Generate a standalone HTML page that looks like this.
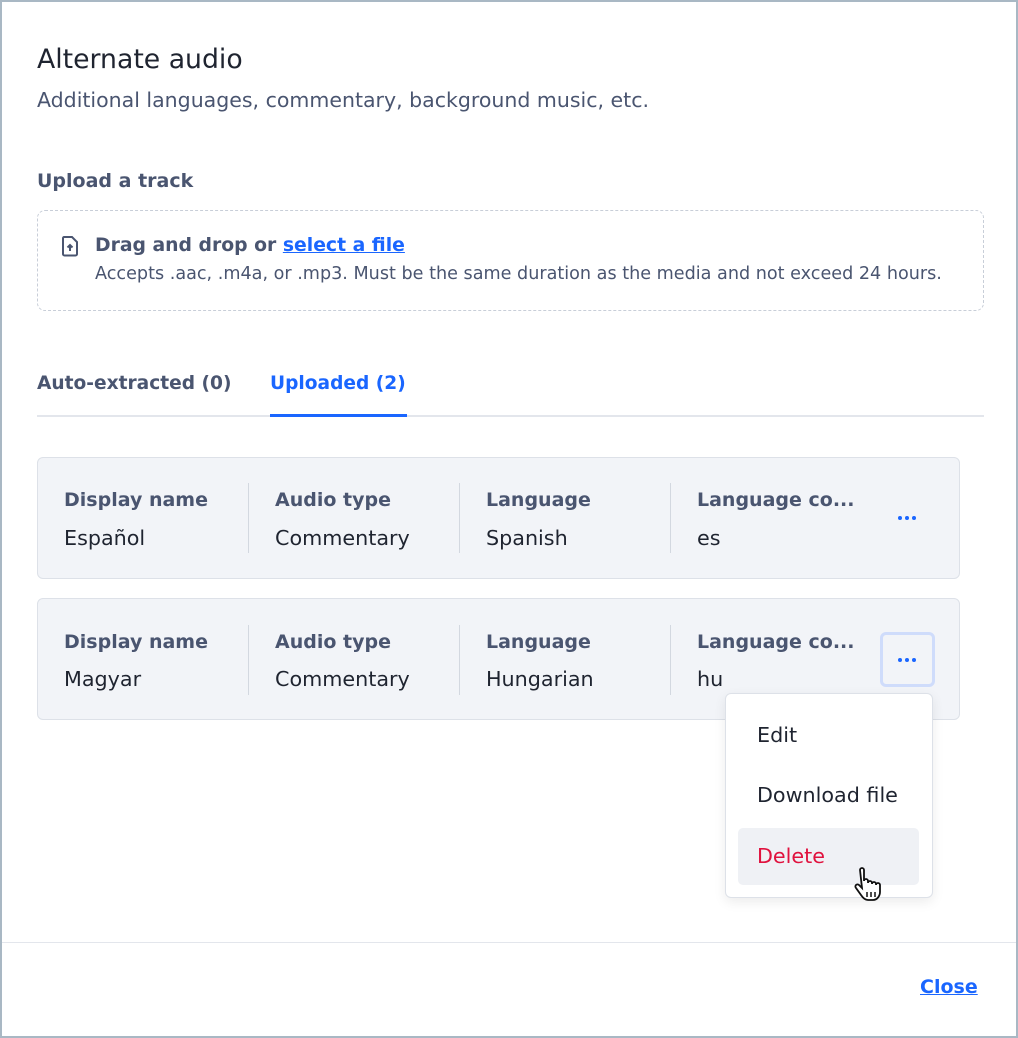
<!DOCTYPE html><html><head><meta charset="utf-8"><style>
*{box-sizing:border-box;margin:0;padding:0}
body{width:1018px;height:1038px;background:#fff;font-family:"DejaVu Sans","Liberation Sans",sans-serif;position:relative;overflow:hidden;color:#1f2430}
.frame{position:absolute;left:0;top:0;width:1018px;height:1038px;border:2px solid #a9b8c4}
.a{position:absolute;white-space:nowrap}
.card{position:absolute;left:37px;width:923px;height:122px;background:#f2f4f8;border:1px solid #dde1e8;border-radius:6px}
.lab{font-size:19px;font-weight:bold;color:#4a5570}
.val{font-size:20.7px;color:#1f2430}
.div{position:absolute;width:1px;height:70px;background:#d3d8e0}
.dots{position:absolute;width:20px;height:4px}
.dots i{position:absolute;top:0;width:4px;height:4px;border-radius:50%;background:#1a66ff}
</style></head><body>
<div class="frame"></div>
<div class="a" style="left:37px;top:44px;font-size:26.7px;color:#1f2430">Alternate audio</div>
<div class="a" style="left:37px;top:88px;font-size:20.5px;color:#4a5570">Additional languages, commentary, background music, etc.</div>
<div class="a" style="left:37px;top:170px;font-size:19px;font-weight:bold;color:#4a5570">Upload a track</div>
<div class="a" style="left:37px;top:210px;width:947px;height:101px;border:1px dashed #c8ced8;border-radius:8px"></div>
<svg class="a" style="left:60px;top:235px" width="20" height="22" viewBox="0 0 20 22"><path d="M4 2h8l5 5v12a1.5 1.5 0 0 1-1.5 1.5h-11A1.5 1.5 0 0 1 3 19V3.5A1.5 1.5 0 0 1 4 2z" fill="none" stroke="#4a5570" stroke-width="2"/><path d="M10 16V10M7.5 12.5L10 10l2.5 2.5" fill="none" stroke="#4a5570" stroke-width="2"/></svg>
<div class="a" style="left:95px;top:235px;font-size:18.8px;font-weight:bold;color:#4a5570">Drag and drop or <span style="color:#1a66ff;text-decoration:underline">select a file</span></div>
<div class="a" style="left:95px;top:264px;font-size:17.6px;color:#4a5570">Accepts .aac, .m4a, or .mp3. Must be the same duration as the media and not exceed 24 hours.</div>
<div class="a" style="left:37px;top:373px;font-size:18.6px;font-weight:bold;color:#4a5570">Auto-extracted (0)</div>
<div class="a" style="left:270px;top:373px;font-size:18.6px;font-weight:bold;color:#1a66ff">Uploaded (2)</div>
<div class="a" style="left:37px;top:415px;width:947px;height:2px;background:#e3e6ec"></div>
<div class="a" style="left:270px;top:414px;width:137px;height:3px;background:#1a66ff"></div>

<div class="card" style="top:457px"></div>
<div class="card" style="top:598px"></div>
<div class="a lab" style="left:64px;top:489px">Display name</div><div class="a val" style="left:64px;top:526px">Español</div>
<div class="a lab" style="left:275px;top:489px">Audio type</div><div class="a val" style="left:275px;top:526px">Commentary</div>
<div class="a lab" style="left:486px;top:489px">Language</div><div class="a val" style="left:486px;top:526px">Spanish</div>
<div class="a lab" style="left:697px;top:489px">Language co...</div><div class="a val" style="left:697px;top:526px">es</div>
<div class="div" style="left:248px;top:483px"></div><div class="div" style="left:459px;top:483px"></div><div class="div" style="left:670px;top:483px"></div>
<div class="dots" style="left:898px;top:516px"><i style="left:0"></i><i style="left:7px"></i><i style="left:14px"></i></div>

<div class="a lab" style="left:64px;top:631px">Display name</div><div class="a val" style="left:64px;top:667px">Magyar</div>
<div class="a lab" style="left:275px;top:631px">Audio type</div><div class="a val" style="left:275px;top:667px">Commentary</div>
<div class="a lab" style="left:486px;top:631px">Language</div><div class="a val" style="left:486px;top:667px">Hungarian</div>
<div class="a lab" style="left:697px;top:631px">Language co...</div><div class="a val" style="left:697px;top:667px">hu</div>
<div class="div" style="left:248px;top:625px"></div><div class="div" style="left:459px;top:625px"></div><div class="div" style="left:670px;top:625px"></div>
<div class="a" style="left:880px;top:632px;width:55px;height:55px;border:3px solid #cfdcfb;border-radius:6px;background:#f2f4f8"></div>
<div class="dots" style="left:898px;top:658px"><i style="left:0"></i><i style="left:7px"></i><i style="left:14px"></i></div>

<div class="a" style="left:725px;top:693px;width:208px;height:205px;background:#fff;border:1px solid #dde1e8;border-radius:6px;box-shadow:0 4px 12px rgba(0,0,0,.08)"></div>
<div class="a" style="left:738px;top:828px;width:181px;height:57px;background:#eff1f5;border-radius:5px"></div>
<div class="a val" style="left:757px;top:723px">Edit</div>
<div class="a val" style="left:757px;top:783px">Download file</div>
<div class="a val" style="left:757px;top:844px;color:#e0123e">Delete</div>
<svg class="a" style="left:852px;top:866px" width="32" height="36" viewBox="0 0 32 36"><path d="M8 4a2 2 0 0 1 4 0v11a2 2 0 0 1 4 0v2a2 2 0 0 1 4 0v1a2 2 0 0 1 4 0v1a2 2 0 0 1 4 0v7c0 4-3 8-7 8h-5c-3 0-5-2-7-5l-5-7a2 2 0 0 1 3-3l3 3z" fill="#fff" stroke="#111" stroke-width="1.8"/><path d="M15 26v5M19 26v5M23 26v5" stroke="#111" stroke-width="1.5"/></svg>

<div class="a" style="left:2px;top:942px;width:1014px;height:1px;background:#e3e6ec"></div>
<div class="a" style="left:920px;top:976px;font-size:19px;font-weight:bold;color:#1a66ff;text-decoration:underline">Close</div>
</body></html>
